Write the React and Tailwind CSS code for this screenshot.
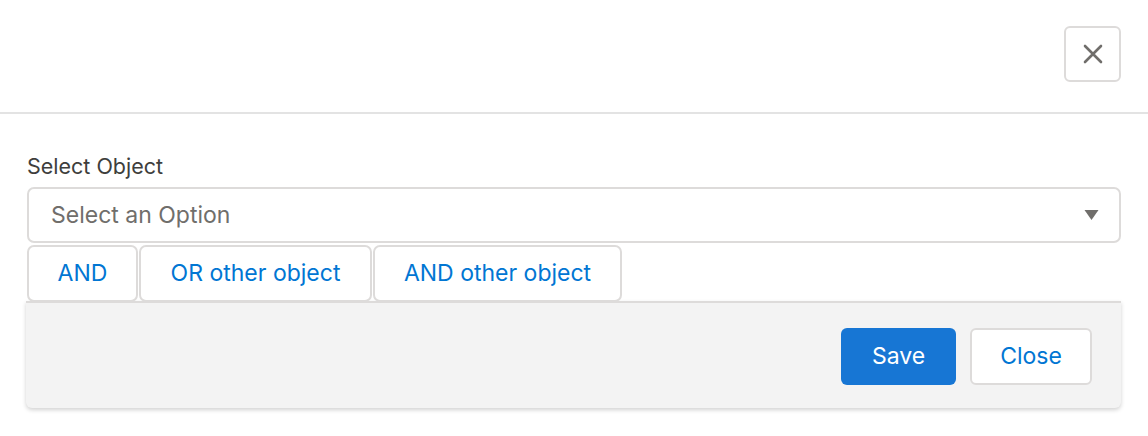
export default function App() {
  const font = { fontFamily: 'Inter, "Noto Sans", sans-serif' };
  return (
    <div className="w-[1148px] h-[436px] bg-white overflow-hidden" style={font}>
      <div className="h-[114px] flex justify-end items-start pt-[26px] pr-[27px] border-b-2 border-[#e3e3e3]">
        <button className="w-[57px] h-[56px] rounded-[6px] border-2 border-[#dddbda] bg-white flex items-center justify-center">
          <svg width="20" height="20" viewBox="0 0 20 20">
            <path d="M2 2 L18 18 M18 2 L2 18" stroke="#706e6b" strokeWidth="2.6" strokeLinecap="round" />
          </svg>
        </button>
      </div>
      <div className="px-[27px] pt-[39px]">
        <div className="text-[21.5px] leading-[26px] text-[#3e3e3c] mb-[8px]">Select Object</div>
        <div className="h-[56px] rounded-[7px] border-2 border-[#dddbda] flex items-center justify-between pl-[22px] pr-[20px]">
          <span className="text-[23px] text-[#706e6b]">Select an Option</span>
          <svg width="15" height="12" viewBox="0 0 15 12">
            <path d="M0.5 1 L14.5 1 L7.5 11 Z" fill="#706e6b" />
          </svg>
        </div>
        <div className="flex gap-[1px] mt-[2px]">
          <button className="w-[111px] h-[57px] rounded-[7px] border-2 border-[#dddbda] bg-white text-[23px] text-[#0176d3]">AND</button>
          <button className="w-[233px] h-[57px] rounded-[7px] border-2 border-[#dddbda] bg-white text-[23px] text-[#0176d3]">OR other object</button>
          <button className="w-[249px] h-[57px] rounded-[7px] border-2 border-[#dddbda] bg-white text-[23px] text-[#0176d3]">AND other object</button>
        </div>
        <div className="-mt-px -ml-px h-[107px] bg-[#f3f3f3] border-t-2 border-[#dddbda] rounded-b-[6px] shadow-[0_2px_4px_rgba(0,0,0,0.18)] flex justify-end items-start pt-[25px] pr-[29px] gap-[14px]">
          <button className="w-[115px] h-[57px] rounded-[6px] bg-[#1776d4] text-white text-[23px]">Save</button>
          <button className="w-[122px] h-[57px] rounded-[6px] bg-white border-2 border-[#dddbda] text-[#0176d3] text-[23px]">Close</button>
        </div>
      </div>
    </div>
  );
}
